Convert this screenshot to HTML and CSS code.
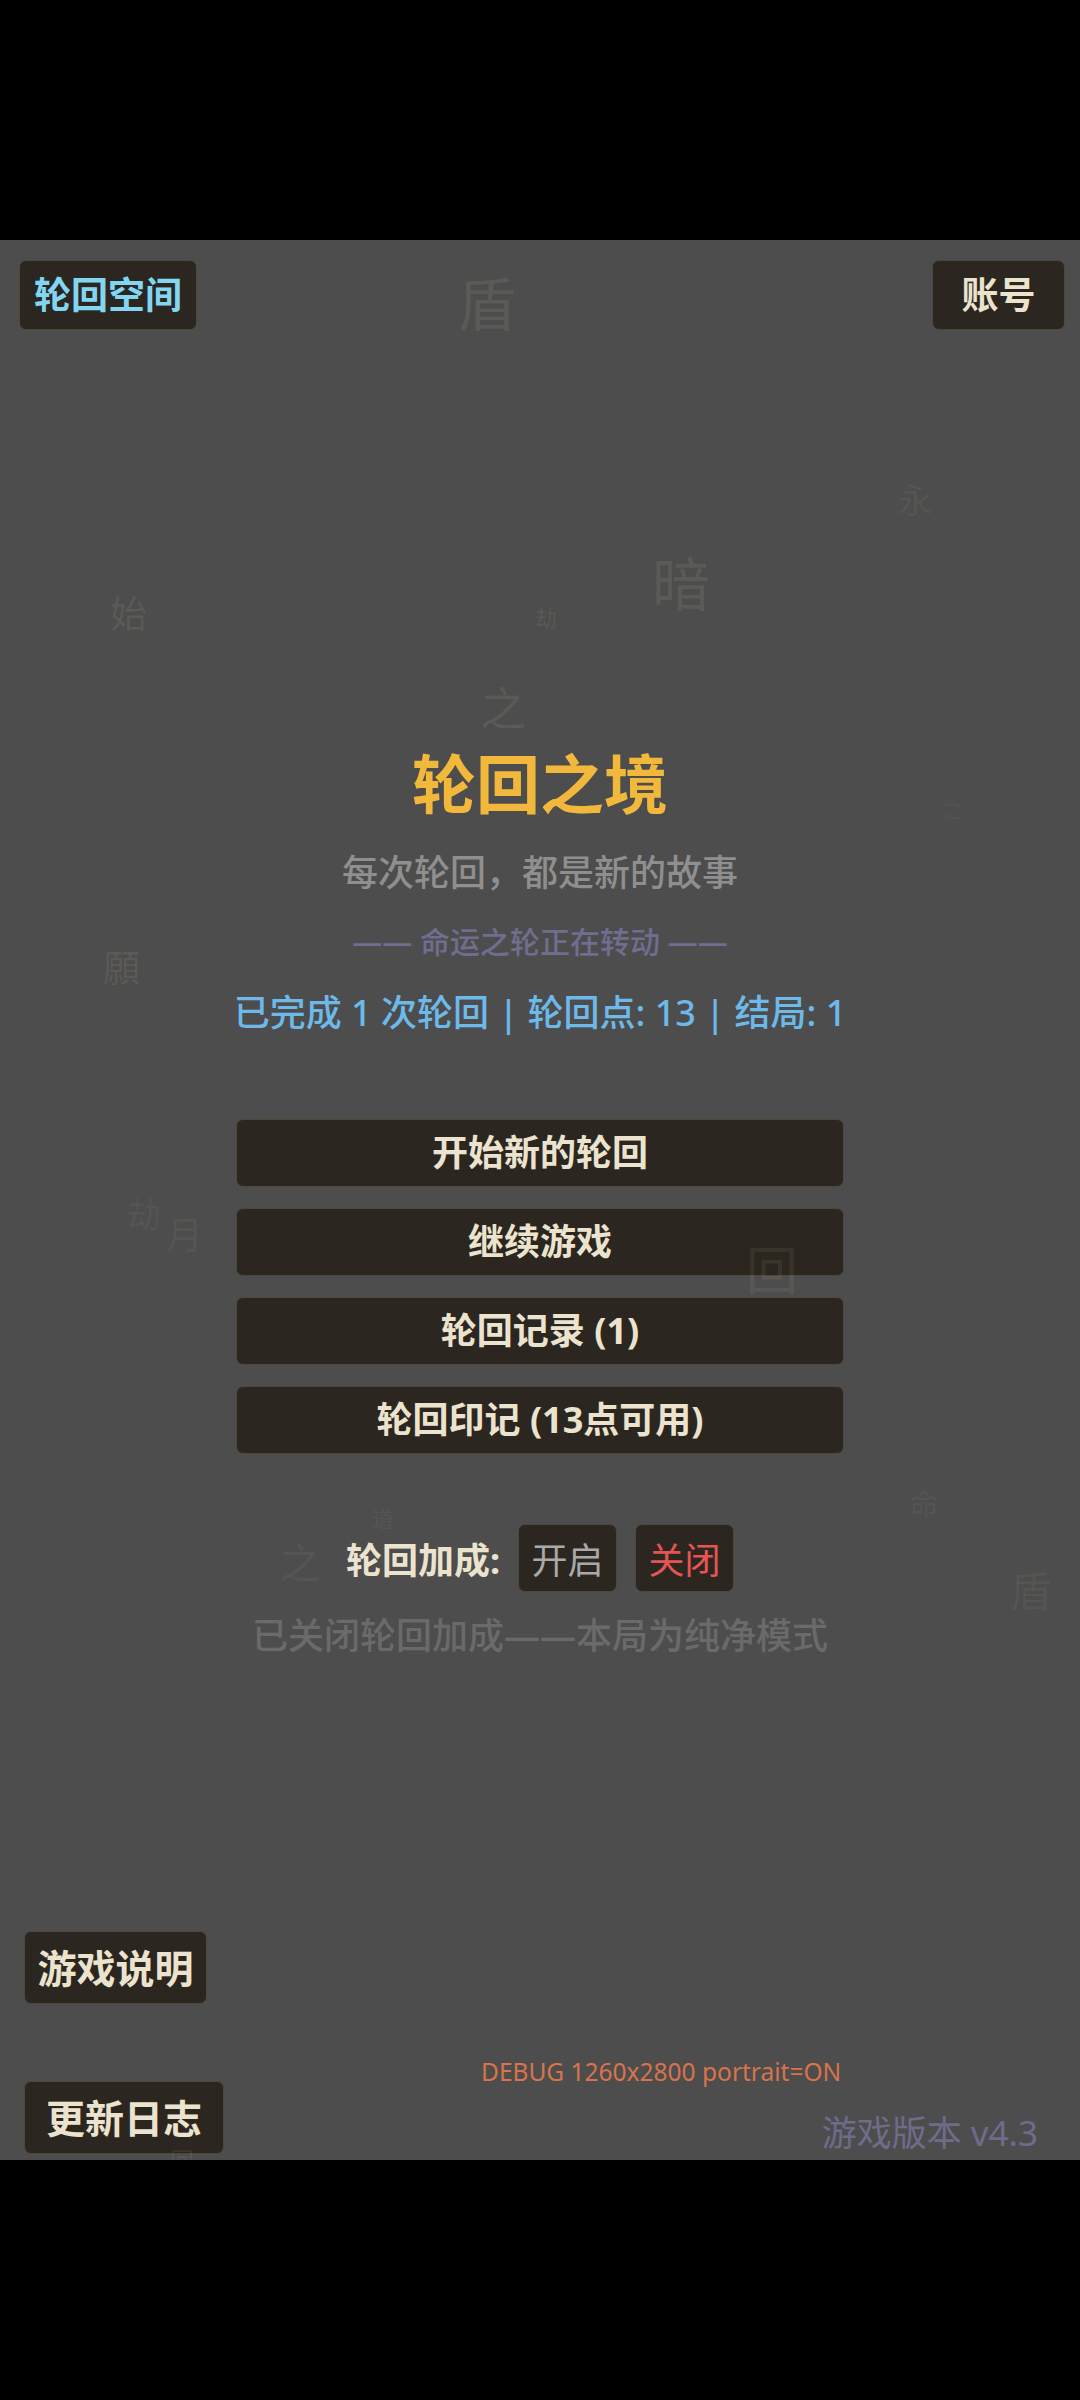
FILE: index.html
```html
<!DOCTYPE html>
<html lang="zh">
<head>
  <meta charset="UTF-8">
  <title>轮回之境</title>
  <link rel="stylesheet" href="styles.css">
</head>
<body>

  <div class="screen">

    <header class="topbar">
      <button class="btn btn-space">轮回空间</button>
      <button class="btn btn-account">账号</button>
    </header>

    <main class="menu">
      <h1 class="title">轮回之境</h1>
      <p class="subtitle">每次轮回，都是新的故事</p>
      <p class="tagline">—— 命运之轮正在转动 ——</p>
      <p class="stats">已完成 1 次轮回 | 轮回点: 13 | 结局: 1</p>

      <div class="actions">
        <button class="btn btn-main">开始新的轮回</button>
        <button class="btn btn-main">继续游戏</button>
        <button class="btn btn-main">轮回记录 (1)</button>
        <button class="btn btn-main">轮回印记 (13点可用)</button>
      </div>

      <div class="bonus">
        <span class="bonus-label">轮回加成:</span>
        <button class="btn btn-toggle">开启</button>
        <button class="btn btn-toggle active">关闭</button>
      </div>
      <p class="bonus-note">已关闭轮回加成——本局为纯净模式</p>
    </main>

    <footer class="footer">
      <div class="footer-left">
        <button class="btn btn-foot">游戏说明</button>
        <button class="btn btn-foot btn-log">更新日志</button>
      </div>
      <div class="footer-right">
        <p class="debug">DEBUG 1260x2800 portrait=ON</p>
        <p class="version">游戏版本 v4.3</p>
      </div>
    </footer>

    <!-- 背景飘字，半透明浮在最上层 -->
    <div class="bg-glyphs">
      <span class="glyph g1">盾</span>
      <span class="glyph g2">永</span>
      <span class="glyph g3">暗</span>
      <span class="glyph g4">始</span>
      <span class="glyph g5">劫</span>
      <span class="glyph g6">之</span>
      <span class="glyph g7">之</span>
      <span class="glyph g8">願</span>
      <span class="glyph g9">劫</span>
      <span class="glyph g10">月</span>
      <span class="glyph g11">回</span>
      <span class="glyph g12">道</span>
      <span class="glyph g13">之</span>
      <span class="glyph g14">命</span>
      <span class="glyph g15">盾</span>
      <span class="glyph g16">回</span>
    </div>

  </div>

</body>
</html>
```

FILE: styles.css
```css
html, body {
  margin: 0;
  padding: 0;
  background: #000;
}

body {
  width: 1080px;
  height: 2400px;
  font-family: "Noto Sans", "Noto Sans CJK SC", sans-serif;
}

p, h1 {
  margin: 0;
}

.screen {
  position: relative;
  width: 1080px;
  height: 1920px;
  margin-top: 240px;
  background: #4d4d4d;
  overflow: hidden;
}

/* 背景飘字 */
.bg-glyphs {
  position: absolute;
  inset: 0;
  z-index: 5;
  pointer-events: none;
}

.glyph {
  position: absolute;
  line-height: 1;
  color: rgba(232, 218, 165, 0.09);
  font-family: "Noto Sans CJK SC", sans-serif;
}

.g1  { left: 458px; top: 32px;   font-size: 58px; }
.g2  { left: 898px; top: 242px;  font-size: 34px; color: rgba(232, 218, 165, 0.07); }
.g3  { left: 652px; top: 312px;  font-size: 58px; }
.g4  { left: 110px; top: 354px;  font-size: 37px; color: rgba(232, 218, 165, 0.1); }
.g5  { left: 535px; top: 365px;  font-size: 22px; }
.g6  { left: 480px; top: 442px;  font-size: 46px; }
.g7  { left: 943px; top: 560px;  font-size: 20px; color: rgba(232, 218, 165, 0.05); }
.g8  { left: 103px; top: 708px;  font-size: 37px; color: rgba(232, 218, 165, 0.1); }
.g9  { left: 127px; top: 956px;  font-size: 34px; color: rgba(232, 218, 165, 0.06); }
.g10 { left: 166px; top: 975px;  font-size: 37px; color: rgba(232, 218, 165, 0.06); }
.g11 { left: 746px; top: 1002px; font-size: 52px; color: rgba(232, 218, 165, 0.08); }
.g12 { left: 372px; top: 1266px; font-size: 22px; color: rgba(232, 218, 165, 0.08); }
.g13 { left: 279px; top: 1300px; font-size: 42px; color: rgba(232, 218, 165, 0.06); }
.g14 { left: 909px; top: 1247px; font-size: 30px; color: rgba(232, 218, 165, 0.06); }
.g15 { left: 1010px; top: 1328px; font-size: 42px; color: rgba(232, 218, 165, 0.06); }
.g16 { left: 170px; top: 1908px; font-size: 24px; }

/* 按钮 */
.btn {
  font-family: "Noto Sans", "Noto Sans CJK SC", sans-serif;
  background: #2b2720;
  border: 1px solid #4f4839;
  border-radius: 7px;
  color: #ece3cf;
  font-weight: 700;
  cursor: pointer;
  padding: 0;
  margin: 0;
}

.topbar {
  position: relative;
  display: flex;
  justify-content: space-between;
  align-items: flex-start;
  padding: 20px 15px 0 19px;
}

.btn-space,
.btn-account {
  height: 70px;
  font-size: 37px;
  line-height: 46px;
}

.btn-space {
  width: 178px;
  color: #82d6f2;
}

.btn-account {
  width: 133px;
}

/* 主菜单 */
.menu {
  position: relative;
  display: flex;
  flex-direction: column;
  align-items: center;
  text-align: center;
}

.title {
  margin-top: 416px;
  font-size: 64px;
  line-height: 76px;
  font-weight: 700;
  color: #f1b83c;
}

.subtitle {
  margin-top: 26px;
  font-size: 36px;
  line-height: 50px;
  font-weight: 500;
  color: #8f8f8f;
}

.tagline {
  margin-top: 24px;
  font-size: 30px;
  line-height: 40px;
  font-weight: 500;
  color: #6f6e8f;
}

.stats {
  margin-top: 26px;
  font-size: 36px;
  line-height: 50px;
  font-weight: 500;
  color: #6cb9ea;
}

.actions {
  margin-top: 81px;
  display: flex;
  flex-direction: column;
  gap: 21px;
}

.btn-main {
  width: 608px;
  height: 68px;
  font-size: 36px;
  line-height: 46px;
}

.bonus {
  margin-top: 70px;
  display: flex;
  align-items: center;
  gap: 18px;
}

.bonus-label {
  font-size: 36px;
  font-weight: 700;
  color: #ece3cf;
}

.btn-toggle {
  width: 99px;
  height: 68px;
  font-size: 36px;
  font-weight: 400;
  color: #a9a9a9;
}

.btn-toggle.active {
  color: #e85454;
}

.bonus-note {
  margin-top: 19px;
  font-size: 36px;
  line-height: 50px;
  font-weight: 500;
  color: #6a6a6a;
}

/* 底部 */
.footer {
  position: relative;
  display: flex;
  align-items: flex-start;
  margin-top: 270px;
  padding-left: 24px;
}

.footer-left {
  display: flex;
  flex-direction: column;
  align-items: flex-start;
  gap: 77px;
}

.btn-foot {
  width: 183px;
  height: 73px;
  font-size: 39px;
  line-height: 50px;
}

.btn-foot.btn-log {
  width: 200px;
}

.footer-right {
  flex: 1;
  display: flex;
  flex-direction: column;
}

.debug {
  margin-top: 123px;
  margin-left: 257px;
  font-size: 24.5px;
  line-height: 36px;
  color: #d8734b;
}

.version {
  align-self: flex-end;
  margin-top: 20px;
  margin-right: 42px;
  font-size: 35px;
  line-height: 46px;
  color: #6d6c8a;
}
```
